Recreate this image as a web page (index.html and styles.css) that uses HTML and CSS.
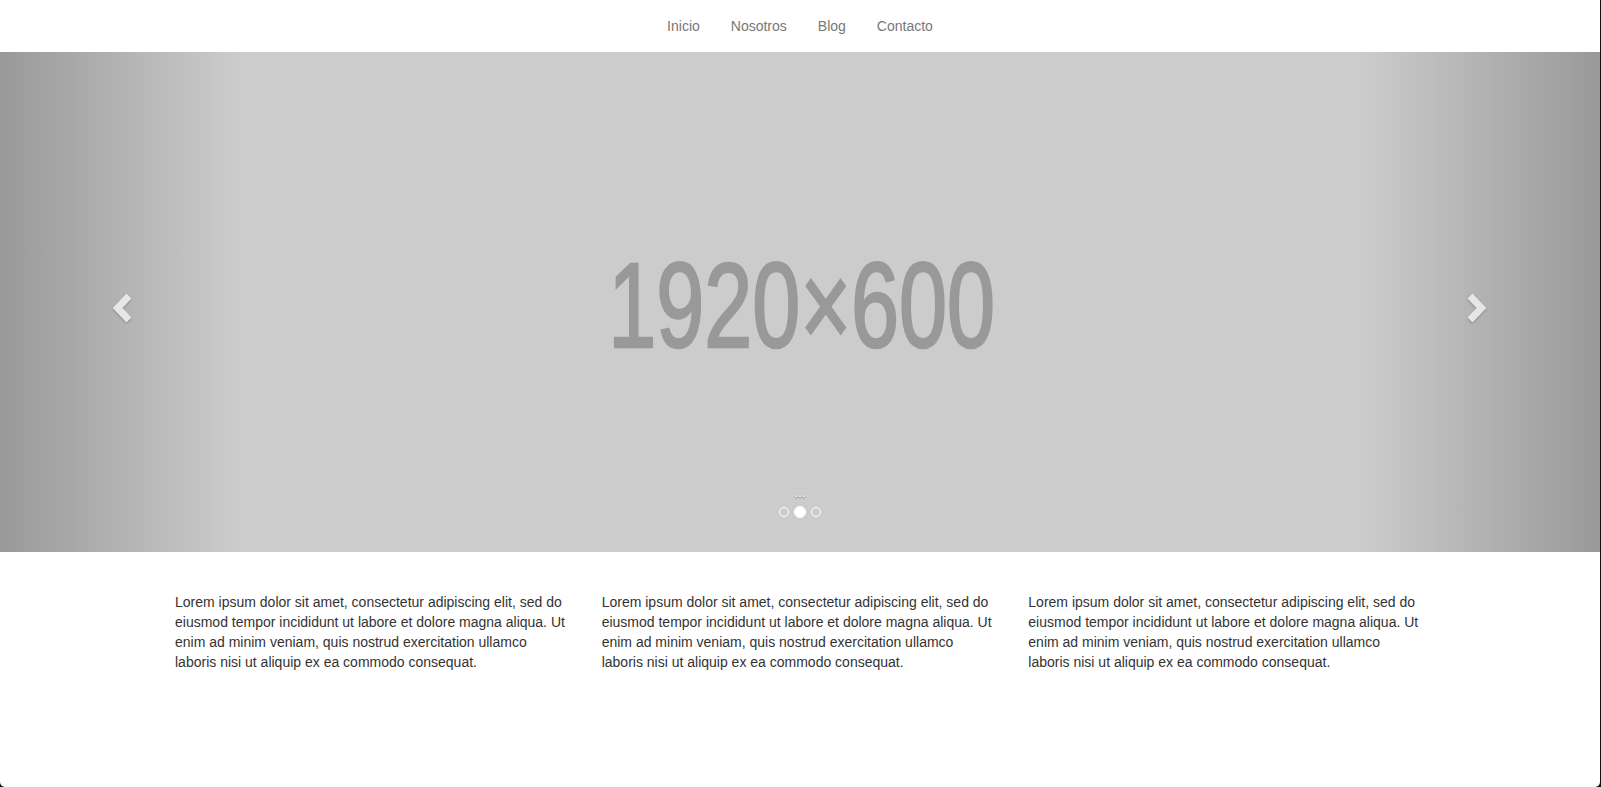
FILE: index.html
```html
<!DOCTYPE html>
<html lang="es">
<head>
<meta charset="utf-8">
<title>Inicio</title>
<link rel="stylesheet" href="styles.css">
</head>
<body>
<div class="page">
  <nav class="navbar">
    <ul class="nav">
      <li><a href="#">Inicio</a></li>
      <li><a href="#">Nosotros</a></li>
      <li><a href="#">Blog</a></li>
      <li><a href="#">Contacto</a></li>
    </ul>
  </nav>

  <section class="carousel">
    <div class="slide">
      <span class="holder-text">1920×600</span>
    </div>
    <a class="control control-left" href="#">
      <svg class="chevron" width="30" height="30" viewBox="0 0 30 30" aria-hidden="true">
        <polyline points="19,3 7.5,15 19,27" fill="none" stroke="#e6e6e6" stroke-width="7" stroke-linejoin="miter" stroke-linecap="butt"/>
      </svg>
    </a>
    <a class="control control-right" href="#">
      <svg class="chevron" width="30" height="30" viewBox="0 0 30 30" aria-hidden="true">
        <polyline points="11,3 22.5,15 11,27" fill="none" stroke="#e6e6e6" stroke-width="7" stroke-linejoin="miter" stroke-linecap="butt"/>
      </svg>
    </a>
    <div class="caption">...</div>
    <ol class="indicators">
      <li></li>
      <li class="active"></li>
      <li></li>
    </ol>
  </section>

  <main class="container">
    <p>Lorem ipsum dolor sit amet, consectetur adipiscing elit, sed do eiusmod tempor incididunt ut labore et dolore magna aliqua. Ut enim ad minim veniam, quis nostrud exercitation ullamco laboris nisi ut aliquip ex ea commodo consequat.</p>
    <p>Lorem ipsum dolor sit amet, consectetur adipiscing elit, sed do eiusmod tempor incididunt ut labore et dolore magna aliqua. Ut enim ad minim veniam, quis nostrud exercitation ullamco laboris nisi ut aliquip ex ea commodo consequat.</p>
    <p>Lorem ipsum dolor sit amet, consectetur adipiscing elit, sed do eiusmod tempor incididunt ut labore et dolore magna aliqua. Ut enim ad minim veniam, quis nostrud exercitation ullamco laboris nisi ut aliquip ex ea commodo consequat.</p>
  </main>
  <span class="edge-mark"></span>
</div>
</body>
</html>
```

FILE: styles.css
```css
html {
  background: #111;
}

body {
  margin: 0;
  font-family: "Liberation Sans", Arial, Helvetica, sans-serif;
  font-size: 14px;
  line-height: 20px;
  color: #333;
}

.page {
  position: relative;
  width: 1600px;
  height: 787px;
  background: #fff;
  border-bottom-left-radius: 5px;
  border-bottom-right-radius: 5px;
  overflow: hidden;
}

.navbar {
  height: 52px;
  background: #fff;
  display: flex;
  justify-content: center;
}

.nav {
  list-style: none;
  margin: 0;
  padding: 0;
  display: flex;
}

.nav a {
  display: block;
  padding: 16px 15.5px;
  color: #777;
  text-decoration: none;
}

.carousel {
  position: relative;
  height: 500px;
  overflow: hidden;
}

.slide {
  height: 100%;
  background: #ccc;
  display: flex;
  align-items: center;
  justify-content: center;
}

.holder-text {
  display: inline-block;
  font-family: "Liberation Sans", Arial, sans-serif;
  font-weight: normal;
  font-size: 120px;
  line-height: 1;
  color: #999;
  -webkit-text-stroke: 2.6px #999;
  transform: scaleX(0.72);
  margin-left: 3px;
  margin-top: 6px;
}

.control {
  position: absolute;
  top: 0;
  bottom: 0;
  width: 15%;
  display: flex;
  align-items: center;
}

.control-left {
  left: 0;
  background: linear-gradient(to right, rgba(0, 0, 0, 0.25) 0%, rgba(0, 0, 0, 0) 100%);
}

.control-right {
  right: 0;
  background: linear-gradient(to right, rgba(0, 0, 0, 0) 0%, rgba(0, 0, 0, 0.25) 100%);
  justify-content: flex-end;
}

.chevron {
  display: block;
  filter: drop-shadow(0 1px 1px rgba(0, 0, 0, 0.25));
}

.control-left .chevron {
  margin-left: 110px;
  margin-top: 12px;
}

.control-right .chevron {
  margin-right: 111px;
  margin-top: 12px;
}

.caption {
  position: absolute;
  left: 20%;
  right: 20%;
  bottom: 50px;
  text-align: center;
  color: #fff;
  font-size: 14px;
  line-height: 20px;
  text-shadow: 0 1px 2px rgba(0, 0, 0, 0.6);
}

.indicators {
  position: absolute;
  left: 0;
  right: 0;
  bottom: 34px;
  margin: 0;
  padding: 0;
  list-style: none;
  display: flex;
  justify-content: center;
  align-items: center;
  gap: 5px;
}

.indicators li {
  box-sizing: border-box;
  width: 10px;
  height: 10px;
  border: 1px solid #fff;
  border-radius: 50%;
}

.indicators li.active {
  width: 12px;
  height: 12px;
  background: #fff;
}

.container {
  width: 1280px;
  margin: 0 auto;
  padding-top: 40px;
  display: grid;
  grid-template-columns: repeat(3, 1fr);
}

.container p {
  margin: 0;
  padding: 0 15px;
}

.edge-mark {
  position: absolute;
  right: -1px;
  top: 352px;
  width: 1px;
  height: 34px;
  background: #4ba5c9;
}
```
